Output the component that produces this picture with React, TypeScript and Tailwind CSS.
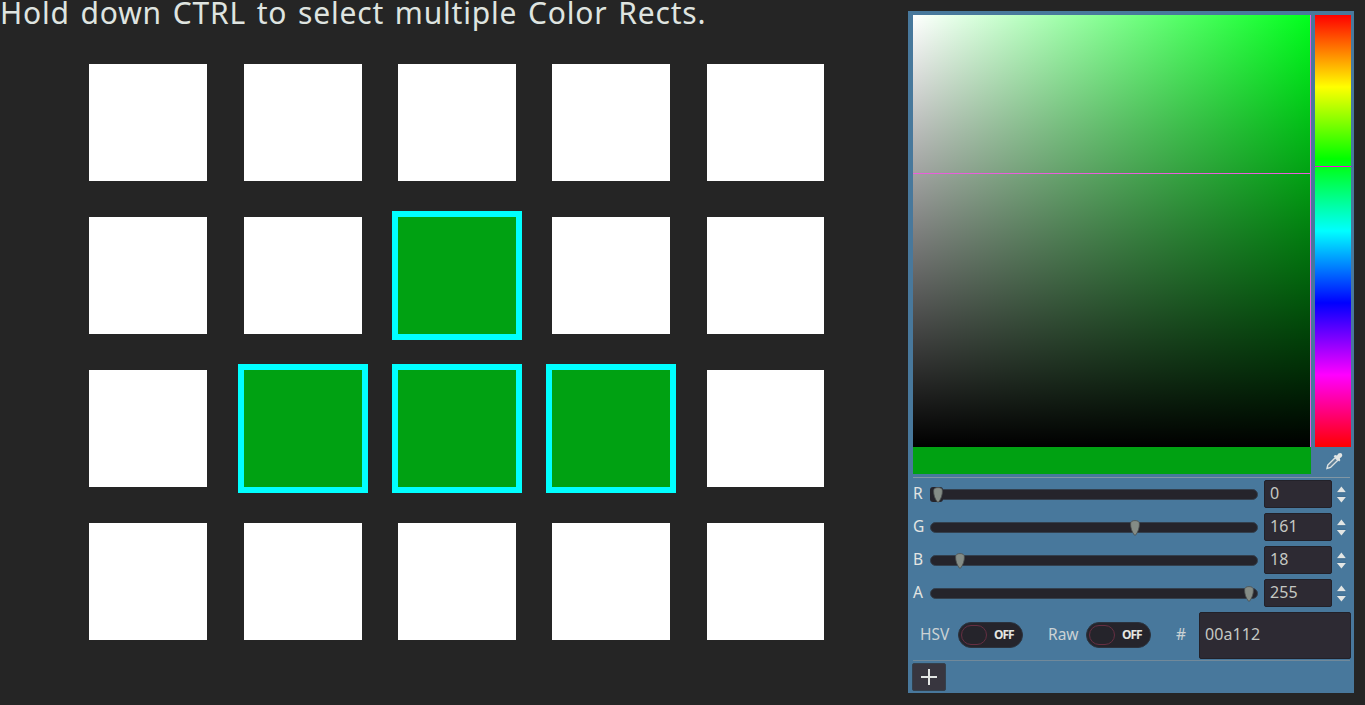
import React from "react";

const GREEN_CELLS = new Set([7, 11, 12, 13]);

const CHANNELS = [
  { label: "R", value: 0 },
  { label: "G", value: 161 },
  { label: "B", value: 18 },
  { label: "A", value: 255 },
];

function ColorCell({ selected }: { selected: boolean }) {
  return selected ? (
    <div className="h-[117px] w-full max-w-[118px] bg-[#00a112] outline-[6px] outline-solid outline-[#00ffff]" />
  ) : (
    <div className="h-[117px] w-full max-w-[118px] bg-white" />
  );
}

function Grabber() {
  return (
    <svg width="12" height="18" viewBox="0 0 12 18" className="block">
      <path
        d="M6 1.6C8.6 1.6 10.4 2.4 10.4 5C10.4 9 9 13 6.6 16.1H5.4C3 13 1.6 9 1.6 5C1.6 2.4 3.4 1.6 6 1.6Z"
        fill="#848c86"
        stroke="#4b5050"
        strokeWidth="0.8"
      />
    </svg>
  );
}

function Spinner() {
  return (
    <svg width="11" height="18" viewBox="0 0 11 18" className="block">
      <path d="M5.4 1.5L9.9 7.2H0.9Z" fill="#e3e6e4" />
      <path d="M0.9 12H9.9L5.4 17.5Z" fill="#e3e6e4" />
      <path d="M1 7.8H10M1 11.3H10" stroke="#39658a" strokeWidth="0.6" />
    </svg>
  );
}

function ChannelRow({ label, value }: { label: string; value: number }) {
  return (
    <div className="flex h-[33px] items-start">
      <div className="-mt-px w-[17px] text-[15.5px] leading-[28px] text-[#e3e5e2]">{label}</div>
      <div className="relative mt-[9px] h-[11px] w-[328px] rounded-full border border-[#33404e] bg-[#25242b]">
        {value === 0 && <div className="absolute -top-[3px] -left-px h-[15px] w-[13px] rounded-[3px] bg-[#25242b]" />}
        <div className="absolute -top-[4px]" style={{ left: 1.4 + (value / 255) * 310.8 }}>
          <Grabber />
        </div>
      </div>
      <div className="ml-[6px] h-[28px] w-[68px] rounded-[2px] border border-[#222129] bg-[#2d2a33] pl-[5px] text-[16px] leading-[24px] tracking-[0.1px] text-[#c5c8c3]">
        {value}
      </div>
      <div className="mt-[5px] ml-[4px]">
        <Spinner />
      </div>
    </div>
  );
}

function Toggle() {
  return (
    <div className="-mt-px flex h-[26px] w-[65px] items-center rounded-full border border-[#2b323d] bg-[#25242b] pl-[2px]">
      <div className="h-[20px] w-[26px] rounded-full border border-[#652f42]" />
      <div className="ml-[7px] text-[12px] leading-none font-bold tracking-[-1.1px] text-[#e4e6e2]">OFF</div>
    </div>
  );
}

function Picker() {
  return (
    <section className="mt-[11px] ml-[84px] flex h-[682px] w-[446px] shrink-0 flex-col bg-[#48789c] pt-[4px] pl-[5px]">
      <div className="flex h-[432px] gap-[4px]">
        <div className="relative w-[398px] bg-[linear-gradient(to_bottom,transparent,#000),linear-gradient(to_right,#fff,#00ff1c)]">
          <div className="absolute top-[158px] left-0 h-px w-full bg-[#e95edb]" />
          <div className="absolute top-0 right-0 h-full w-px bg-[#e95edb]" />
        </div>
        <div className="relative w-[36px] bg-[linear-gradient(to_bottom,#f00,#ff0_16.67%,#0f0_33.33%,#0ff_50%,#00f_66.67%,#f0f_83.33%,#f00)]">
          <div className="absolute top-[151px] h-px w-full bg-[#ff00e3]" />
        </div>
      </div>
      <div className="flex h-[27px]">
        <div className="w-[398px] bg-[#00a112]" />
        <svg width="18" height="18" viewBox="0 0 18 18" className="mt-[5px] ml-[14px]">
          <path d="M2 16.4L2.8 13L10.2 5.8L12.8 8.2L5.5 15.4Z" fill="#5d7f98" stroke="#dce2e2" strokeWidth="1.4" />
          <path d="M8.6 4.2L10 3L12 3.6L13.4 1.6Q15.2 .4 16.7 1.6Q18 3.3 16.6 5L14.8 6.2L15.3 8.2L14.2 9.6Z" fill="#e3e6e4" />
        </svg>
      </div>
      <div className="mt-[3px] h-px w-[437px] bg-[#8197a5]" />
      <div className="mt-[2px] h-[132px]">
        {CHANNELS.map((c) => (
          <ChannelRow key={c.label} label={c.label} value={c.value} />
        ))}
      </div>
      <div className="flex h-[47px] items-center text-[15.5px] text-[#cbd2d4]">
        <span className="-mt-px ml-[7px] w-[38px]">HSV</span>
        <Toggle />
        <span className="-mt-px ml-[25px] w-[38px]">Raw</span>
        <Toggle />
        <span className="-mt-px ml-[25px] w-[23px]">#</span>
        <div className="h-[47px] w-[152px] shrink-0 rounded-[2px] border border-[#222129] bg-[#2d2a33] pl-[5px] text-[16px] leading-[43px] tracking-[0.1px] text-[#c5c8c3]">
          00a112
        </div>
      </div>
      <div className="mt-px h-px w-[437px] bg-[#71899a]" />
      <button className="mt-[2px] -ml-px flex h-[28px] w-[34px] items-center justify-center rounded-[2px] border border-[#34414d] bg-[#38363f]">
        <svg width="16" height="16" viewBox="0 0 16 16">
          <path d="M8 0V16M0 8H16" stroke="#e3e6e4" strokeWidth="2" />
        </svg>
      </button>
    </section>
  );
}

export default function App() {
  return (
    <main className="flex h-[705px] w-[1365px] items-start bg-[#252525] font-['Noto_Sans','Open_Sans',sans-serif]">
      <div className="w-[824px] shrink-0">
        <h1 className="h-[64px] w-max text-[30px] leading-[25px] tracking-[0.8px] [word-spacing:2.2px] whitespace-nowrap text-[#dfe4e0]">
          Hold down CTRL to select multiple Color Rects.
        </h1>
        <div className="ml-[89px] grid w-[735px] grid-cols-[155px_154px_154px_155px_117px] gap-y-[36px]">
          {Array.from({ length: 20 }, (_, i) => (
            <ColorCell key={i} selected={GREEN_CELLS.has(i)} />
          ))}
        </div>
      </div>
      <Picker />
    </main>
  );
}
